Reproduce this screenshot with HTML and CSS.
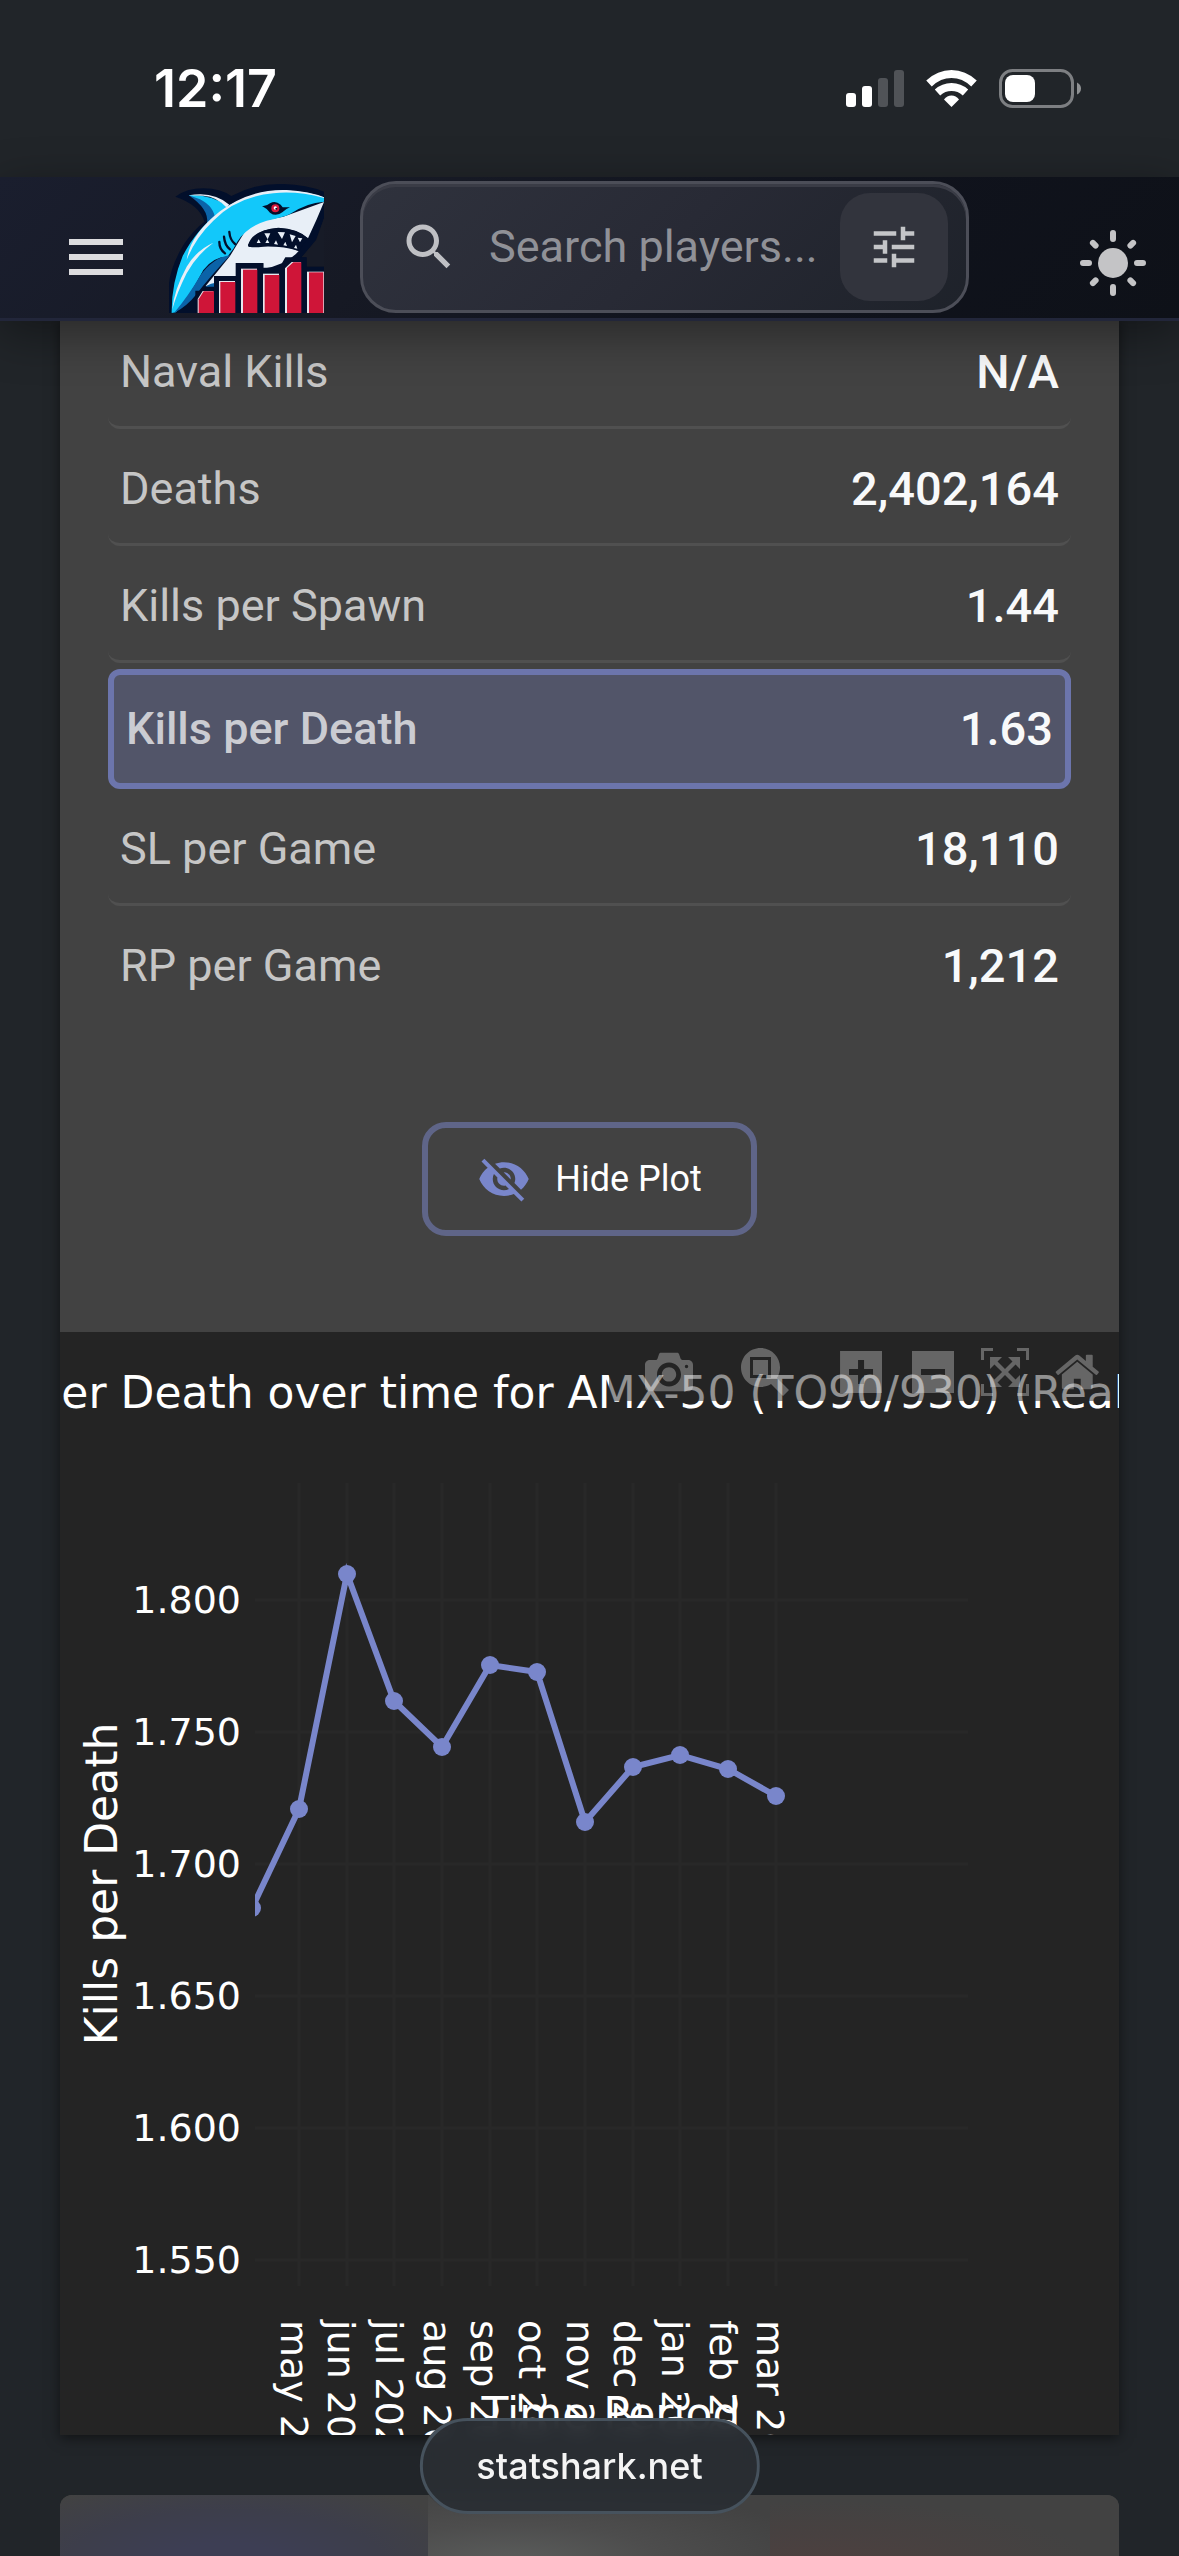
FILE: index.html
```html
<!DOCTYPE html>
<html lang="en">
<head>
<meta charset="utf-8">
<meta name="viewport" content="width=device-width, initial-scale=1">
<title>StatShark</title>
<link rel="stylesheet" href="styles.css">
</head>
<body>
<div class="page">
  <div class="status-bar">
    <time class="status-time">12:17</time>
    <div class="status-icons">
      <svg class="signal" viewBox="0 0 58 37" aria-hidden="true">
        <g fill="#fff"><rect x="0" y="23" width="10" height="14" rx="3"/><rect x="16" y="16" width="10" height="21" rx="3"/></g>
        <g fill="#505357"><rect x="32" y="8" width="10" height="29" rx="3"/><rect x="48" y="0" width="10" height="37" rx="3"/></g>
      </svg>
      <svg class="wifi" viewBox="0 0 51 37" aria-hidden="true">
        <g fill="none" stroke="#fff" stroke-width="8"><path d="M3 13.500Q13 4 25.500 4T48 13.500"/><path d="M11.500 22.500Q17.500 17 25.500 17T39.500 22.500" /></g>
        <path fill="#fff" d="M25.500 37 18 29.500Q21 25.500 25.500 25.500T33 29.500Z"/>
      </svg>
      <svg class="battery" viewBox="0 0 82 39" aria-hidden="true">
        <rect x="1.500" y="1.500" width="72" height="36" rx="12" fill="none" stroke="#7d7f82" stroke-width="3"/>
        <rect x="6" y="6" width="30" height="27" rx="8" fill="#fff"/>
        <path d="M78 13.500Q82 15.500 82 19.500T78 25.500Z" fill="#8f9193"/>
      </svg>
    </div>
  </div>

  <header class="top-bar">
    <button class="icon-button menu-button" type="button" aria-label="Menu">
      <svg viewBox="0 0 24 24"><path d="M3 18h18v-2H3zm0-5h18v-2H3zm0-7v2h18V6z"/></svg>
    </button>
    <a class="logo" href="#" aria-label="StatShark home">
      <svg viewBox="57 30 465 399">
        <path fill="#020f2b" d="M57 429V340Q62 290 100 225Q130 180 163 155Q150 105 76 80Q110 55 160 55Q212 56 244 78Q320 38 400 42Q470 44 522 65V145L498 210L455 262L470 262V290H522V429Z"/>
        <path fill="#171b27" d="M470 262H522V290H470ZM522 145 500 210 455 262H522Z"/>
        <path fill="#0b63a8" d="M116 76Q190 78 228 113L190 160L171 160Q178 118 116 76Z"/>
        <path fill="#12c8fa" d="M116 76Q170 70 235 108L196 152Q194 110 150 88Z"/>
        <path fill="#e8eff7" d="M116 76Q190 62 238 104L229 112Q200 80 160 77Z"/>
        <path fill="#e8eff7" d="M522 96Q500 150 474 205Q440 176 385 174Q315 178 294 225Q296 236 340 230Q400 228 446 243Q410 285 340 296V280H258V318H200L190 345L167 348L240 258L300 160L400 140Z"/>
        <path fill="#12c8fa" d="M65 429Q64 340 98 258Q140 175 220 116Q320 55 420 62Q480 66 522 82V95Q470 98 420 132Q400 142 350 152Q290 170 262 215Q250 240 232 260Q190 260 160 300Q115 385 78 427Z"/>
        <path fill="#e8eff7" d="M522 84Q440 62 370 70Q260 80 190 152Q135 205 110 270Q120 195 210 124Q300 56 410 60Q480 64 522 82Z"/>
        <path fill="#0b63a8" d="M240 256Q190 262 150 318Q115 378 72 429Q110 410 140 372Q175 326 240 256Z"/>
        <path fill="#e8eff7" d="M190 218Q140 255 110 310Q80 370 67 418Q72 360 110 290Q140 240 190 218Z"/>
        <path fill="#0b63a8" d="M175 345Q186 338 194 340V350H166Z"/>
        <g fill="none" stroke="#020f2b" stroke-width="7" stroke-linecap="round"><path d="M208 216Q208 238 225 250"/><path d="M222 200Q224 226 240 238"/><path d="M238 186Q240 210 255 222"/></g>
        <path fill="#020f2b" d="M336 108Q348 110 360 100Q376 90 392 104L398 112L420 112Q405 118 398 126Q378 142 360 128Q352 116 336 108Z"/>
        <circle cx="376" cy="115" r="12" fill="#d5193b"/><circle cx="376" cy="114" r="5" fill="#fff"/><circle cx="379" cy="116" r="3" fill="#020f2b"/>
        <path fill="#020f2b" d="M294 226Q306 180 385 173Q445 176 474 205Q462 222 446 243Q400 222 296 231Z"/>
        <path fill="#e8eff7" d="M343 190l10 18 8-18zm40-4 13 21 9-20zm36 7 7 24 11-19zm24 10 7 14 7-12zM320 219l6-11 6 11zm26 0 6-11 6 11zm26 3 6-11 6 13zm28 4 6-11 5 13zm32 8 6-10 4 12z"/>
        <path fill="#020f2b" d="M136 362H192V318H257V279H340V293H388L406 262H470V290H522V429H136Z"/>
        <g fill="#e6e7ee"><path d="M143 387 158 363H190V429H143Z"/><path d="M207 333H255V429H207Z"/><path d="M273 296H321V429H273Z"/><path d="M339 311H387V429H339Z"/><path d="M405 295 425 276H453V429H405Z"/><path d="M471 305H522V429H471Z"/></g>
        <g fill="#cf1538"><path d="M146 388 161 364H192V429H146Z"/><path d="M211 336H256V429H211Z"/><path d="M279 299H322V429H279Z"/><path d="M344 315H388V429H344Z"/><path d="M411 294 430 277H454V429H411Z"/><path d="M477 307H520V429H477Z"/></g>
      </svg>
    </a>
    <form class="search">
      <svg class="search-icon" viewBox="0 0 24 24" aria-hidden="true"><path d="M15.500 14h-.79l-.28-.27C15.410 12.590 16 11.110 16 9.500 16 5.910 13.090 3 9.500 3S3 5.910 3 9.500 5.910 16 9.500 16c1.610 0 3.090-.59 4.230-1.570l.27.28v.79l5 4.990L20.490 19zm-6 0C7.010 14 5 11.990 5 9.500S7.010 5 9.500 5 14 7.010 14 9.500 11.990 14 9.500 14"/></svg>
      <input class="search-input" type="text" placeholder="Search players..." aria-label="Search players">
      <button class="filter-button" type="button" aria-label="Search filters">
        <svg viewBox="0 0 24 24"><path d="M3 17v2h6v-2zM3 5v2h10V5zm10 16v-2h8v-2h-8v-2h-2v6zM7 9v2H3v2h4v2h2V9zm14 4v-2H11v2zm-6-4h2V7h4V5h-4V3h-2z"/></svg>
      </button>
    </form>
    <button class="icon-button theme-button" type="button" aria-label="Light mode">
      <svg viewBox="0 0 24 24"><circle cx="12" cy="12" r="5"/><path class="rays" d="M12 2v2M12 20v2M2 12h2M20 12h2M5.300 5.300l.9.9M17.800 17.800l.9.9M18.700 5.300l-.9.9M6.200 17.800l-.9.900"/></svg>
    </button>
  </header>

  <main class="content">
    <section class="stats-card">
      <dl class="stats">
        <div class="stat"><dt>Naval Kills</dt><dd>N/A</dd></div>
        <div class="stat"><dt>Deaths</dt><dd>2,402,164</dd></div>
        <div class="stat"><dt>Kills per Spawn</dt><dd>1.44</dd></div>
        <div class="stat selected"><dt>Kills per Death</dt><dd>1.63</dd></div>
        <div class="stat"><dt>SL per Game</dt><dd>18,110</dd></div>
        <div class="stat"><dt>RP per Game</dt><dd>1,212</dd></div>
      </dl>
      <button class="plot-toggle" type="button">
        <svg viewBox="0 0 24 24" aria-hidden="true"><path d="M12 7c2.760 0 5 2.240 5 5 0 .65-.13 1.260-.36 1.830l2.920 2.920c1.510-1.260 2.700-2.890 3.430-4.750-1.730-4.390-6-7.500-11-7.500-1.400 0-2.740.25-3.980.7l2.160 2.160C10.740 7.130 11.350 7 12 7M2 4.270l2.280 2.280.46.46C3.080 8.300 1.780 10.020 1 12c1.730 4.390 6 7.500 11 7.500 1.550 0 3.030-.3 4.380-.84l.42.42L19.730 22 21 20.730 3.270 3zM7.530 9.800l1.550 1.550c-.05.21-.08.43-.08.65 0 1.660 1.340 3 3 3 .22 0 .44-.03.65-.08l1.550 1.550c-.67.33-1.410.53-2.200.53-2.760 0-5-2.240-5-5 0-.79.2-1.530.53-2.200m4.310-.78 3.150 3.150.02-.16c0-1.660-1.340-3-3-3z"/></svg>
        Hide Plot
      </button>
      <figure class="plot">
        <svg class="chart" viewBox="60 1332 1059 1103" role="img" aria-label="Kills per Death over time">
          <defs><clipPath id="plot-area"><rect x="255" y="1483" width="713" height="803"/></clipPath></defs>
          <path class="grid" d="M255 1600H968M255 1732H968M255 1864H968M255 1996H968M255 2128H968M255 2260H968M299 1483V2286M347 1483V2286M394 1483V2286M442 1483V2286M490 1483V2286M537 1483V2286M585 1483V2286M633 1483V2286M680 1483V2286M728 1483V2286M776 1483V2286"/>
          <g clip-path="url(#plot-area)">
            <path class="line" d="M252 1908 299 1809 347 1574 394 1701 442 1747 490 1665 537 1672 585 1822 633 1767 680 1755 728 1769 776 1796"/>
            <g class="dots"><circle cx="252" cy="1908" r="9"/><circle cx="299" cy="1809" r="9"/><circle cx="347" cy="1574" r="9"/><circle cx="394" cy="1701" r="9"/><circle cx="442" cy="1747" r="9"/><circle cx="490" cy="1665" r="9"/><circle cx="537" cy="1672" r="9"/><circle cx="585" cy="1822" r="9"/><circle cx="633" cy="1767" r="9"/><circle cx="680" cy="1755" r="9"/><circle cx="728" cy="1769" r="9"/><circle cx="776" cy="1796" r="9"/></g>
          </g>
          <g class="tick-y">
            <text x="241" y="1613">1.800</text><text x="241" y="1745">1.750</text><text x="241" y="1877">1.700</text><text x="241" y="2009">1.650</text><text x="241" y="2141">1.600</text><text x="241" y="2273">1.550</text>
          </g>
          <g class="tick-x">
            <text transform="translate(281 2320) rotate(90)">may 2024</text><text transform="translate(328 2320) rotate(90)">jun 2024</text><text transform="translate(376 2320) rotate(90)">jul 2024</text><text transform="translate(424 2320) rotate(90)">aug 2024</text><text transform="translate(471 2320) rotate(90)">sep 2024</text><text transform="translate(519 2320) rotate(90)">oct 2024</text><text transform="translate(567 2320) rotate(90)">nov 2024</text><text transform="translate(614 2320) rotate(90)">dec 2024</text><text transform="translate(662 2320) rotate(90)">jan 2025</text><text transform="translate(710 2320) rotate(90)">feb 2025</text><text transform="translate(757 2320) rotate(90)">mar 2025</text>
          </g>
          <text class="axis-title" x="611" y="2429">Time Period</text>
          <text class="axis-title" transform="translate(117 1884) rotate(-90)">Kills per Death</text>
          <text class="chart-title" x="-69" y="1408">Kills per Death over time for AMX-50 (TO90/930) (Realistic)</text>
        </svg>
        <div class="modebar">
          <button class="mode" type="button" aria-label="Download plot"><svg viewBox="0 0 1000 1000"><path transform="matrix(1 0 0 -1 0 850)" d="m500 450c-83 0-150-67-150-150 0-83 67-150 150-150 83 0 150 67 150 150 0 83-67 150-150 150z m400 150h-120c-16 0-34 13-39 29l-31 93c-6 15-23 28-40 28h-340c-16 0-34-13-39-28l-31-94c-6-15-23-28-40-28h-120c-55 0-100-45-100-100v-450c0-55 45-100 100-100h800c55 0 100 45 100 100v450c0 55-45 100-100 100z m-400-550c-138 0-250 112-250 250 0 138 112 250 250 250 138 0 250-112 250-250 0-138-112-250-250-250z m365 380c-19 0-35 16-35 35 0 19 16 35 35 35 19 0 35-16 35-35 0-19-16-35-35-35z"/></svg></button>
          <button class="mode group" type="button" aria-label="Zoom"><svg viewBox="0 0 1000 1000"><path transform="matrix(1 0 0 -1 0 850)" d="m1000-25l-250 251c40 63 63 138 63 218 0 224-182 406-407 406-224 0-406-182-406-406s183-406 407-406c80 0 155 22 218 62l250-250 125 125z m-812 250l0 438 437 0 0-438-437 0z m62 375l313 0 0-312-313 0 0 312z"/></svg></button>
          <button class="mode group" type="button" aria-label="Zoom in"><svg viewBox="0 0 875 1000"><path transform="matrix(1 0 0 -1 0 850)" d="m1 787l0-875 875 0 0 875-875 0z m687-500l-187 0 0-187-125 0 0 187-188 0 0 125 188 0 0 187 125 0 0-187 187 0 0-125z"/></svg></button>
          <button class="mode" type="button" aria-label="Zoom out"><svg viewBox="0 0 875 1000"><path transform="matrix(1 0 0 -1 0 850)" d="m0 788l0-876 875 0 0 876-875 0z m688-500l-500 0 0 125 500 0 0-125z"/></svg></button>
          <button class="mode" type="button" aria-label="Autoscale"><svg viewBox="0 0 1000 1000"><path transform="matrix(1 0 0 -1 0 850)" d="m250 850l-187 0-63 0 0-62 0-188 63 0 0 188 187 0 0 62z m688 0l-188 0 0-62 188 0 0-188 62 0 0 188 0 62-62 0z m-875-938l0 188-63 0 0-188 0-62 63 0 187 0 0 62-187 0z m875 188l0-188-188 0 0-62 188 0 62 0 0 62 0 188-62 0z m-125 188l-1 0-93-94-156 156 156 156 92-93 2 0 0 250-250 0 0-2 93-92-156-156-156 156 94 92 0 2-250 0 0-250 0 0 93 93 157-156-157-156-93 94 0 0 0-250 250 0 0 0-94 93 156 157 156-157-93-93 0 0 250 0 0 250z"/></svg></button>
          <button class="mode" type="button" aria-label="Reset axes"><svg viewBox="0 0 928 1000"><path transform="matrix(1 0 0 -1 0 850)" d="m786 296v-267q0-15-11-26t-25-10h-214v214h-143v-214h-214q-15 0-25 10t-11 26v267q0 1 0 2t0 2l321 264 321-264q1-1 1-4z m124 39l-34-41q-5-5-12-6h-2q-7 0-12 3l-386 322-386-322q-7-4-13-4-7 2-12 7l-35 41q-4 5-3 13t6 12l401 334q18 15 42 15t43-15l136-114v109q0 8 5 13t13 5h107q8 0 13-5t5-13v-227l122-102q5-5 6-12t-4-13z"/></svg></button>
        </div>
      </figure>
    </section>
    <section class="next-card">
      <div class="banner banner-left"></div>
      <div class="banner banner-middle"></div>
      <div class="banner banner-right"></div>
    </section>
  </main>
</div>
<a class="address-pill" href="#">statshark.net</a>
</body>
</html>
```
FILE: styles.css
```css
* { box-sizing: border-box; }

body {
  margin: 0;
  background: #212529;
  color: #f8f9fa;
  font-family: Roboto, "Liberation Sans", sans-serif;
}

button { padding: 0; border: 0; background: none; color: inherit; font: inherit; }
svg { display: block; }

.page {
  display: flex;
  flex-direction: column;
  min-height: 100vh;
  overflow: hidden;
}

/* Status bar */
.status-bar {
  display: flex;
  justify-content: space-between;
  align-items: center;
  height: 177px;
  padding: 0 98px 0 154px;
}
.status-time { font: 600 52px/60px Inter, sans-serif; color: #fff; }
.status-icons { display: flex; align-items: center; gap: 22px; }
.signal { width: 58px; height: 37px; }
.wifi { width: 51px; height: 37px; }
.battery { width: 82px; height: 39px; }

/* Header */
.top-bar {
  position: relative;
  z-index: 2;
  display: flex;
  align-items: flex-end;
  height: 144px;
  padding: 0 30px 5px 60px;
  border-bottom: 3px solid #22263a;
  background: linear-gradient(135deg, #1a1e2e 0%, #161924 35%, #10131d 65%, #0e1118 100%);
  box-shadow: 0 12px 48px rgba(0, 0, 0, 0.4);
}
.icon-button { width: 72px; height: 72px; fill: #dcdcde; }
.icon-button svg { width: 72px; height: 72px; }
.menu-button { margin-bottom: 20px; }
.theme-button { margin-bottom: 14px; fill: #c4c4c6; }
.rays { fill: none; stroke: #c4c4c6; stroke-width: 2; stroke-linecap: round; }
.logo { margin: 0 36px 0 37px; }
.logo svg { width: 155px; height: 133px; }
.search {
  display: flex;
  flex: 1;
  align-items: center;
  min-width: 0;
  height: 132px;
  margin-right: 108px;
  padding: 0 18px 0 36px;
  border: 3px solid #4c4e58;
  border-radius: 36px;
  background: linear-gradient(135deg, #2f323d, #282a35 50%, #1e222a);
  box-shadow: inset 0 3px 0 #3a3c46;
}
.search-icon { flex: none; width: 60px; height: 60px; fill: #bfc0c4; }
.search-input {
  flex: 1;
  min-width: 0;
  margin: 0 16px 0 30px;
  padding: 0;
  border: 0;
  outline: 0;
  background: none;
  color: #fff;
  font: 400 45px/60px Roboto, sans-serif;
}
.search-input::placeholder { color: #909197; opacity: 1; }
.filter-button {
  display: grid;
  place-items: center;
  flex: none;
  width: 108px;
  height: 108px;
  border-radius: 30px;
  background: #32343d;
}
.filter-button svg { width: 54px; height: 54px; fill: #c4c5c8; }

/* Statistics card */
.content {
  display: flex;
  flex: 1;
  flex-direction: column;
  gap: 60px;
  margin-top: -3px;
  padding: 0 60px;
}
.stats-card {
  background: #424242;
  box-shadow: 0 3px 12px rgba(0, 0, 0, 0.5);
}
.stats {
  display: flex;
  flex-direction: column;
  gap: 6px;
  margin: 0;
  padding: 0 48px;
}
.stat {
  display: flex;
  justify-content: space-between;
  align-items: center;
  height: 111px;
  padding: 0 12px;
  border-bottom: 3px solid #505050;
  border-radius: 12px;
}
.stat:last-child { border-color: transparent; }
.stat dt { color: #c6c6c6; font-size: 45px; line-height: 60px; }
.stat dd { margin: 0; font-size: 47px; font-weight: 500; line-height: 60px; }
.stat.selected {
  height: 120px;
  border: 6px solid #6c75ac;
  background: #525569;
}
.stat.selected dt { color: #cbccd2; font-weight: 500; }
.plot-toggle {
  display: flex;
  align-items: center;
  gap: 24px;
  height: 114px;
  margin: 99px auto 96px;
  padding: 0 49px;
  border: 6px solid #5f6588;
  border-radius: 24px;
  color: #fff;
  font-size: 36px;
}
.plot-toggle svg { width: 54px; height: 54px; fill: #7986cb; }

/* Plot */
.plot { position: relative; margin: 0; background: #242424; }
.chart { width: 100%; height: auto; overflow: hidden; }
.chart text { fill: #fff; font-family: "DejaVu Sans", sans-serif; }
.grid { stroke: #282828; stroke-width: 3; }
.line { fill: none; stroke: #7986cb; stroke-width: 6; }
.dots { fill: #7986cb; }
.tick-y { font-size: 38px; text-anchor: end; }
.tick-x { font-size: 38px; }
.axis-title { font-size: 44px; text-anchor: middle; }
.chart-title { font-size: 44px; }
.modebar {
  position: absolute;
  top: 6px;
  right: 6px;
  display: flex;
  height: 63px;
  padding: 10px 0 0 24px;
  background: rgba(36, 36, 36, 0.5);
}
.mode { width: 72px; height: 48px; fill: rgba(255, 255, 255, 0.3); }
.mode.group { margin-left: 24px; }
.mode svg { height: 48px; margin: 0 auto; }

/* Vehicle banner card */
.next-card {
  display: grid;
  grid-template-columns: 368fr 342fr 349fr;
  flex: 1;
  overflow: hidden;
  border-radius: 12px 12px 0 0;
  background: #424242;
}
.banner-left { background: radial-gradient(ellipse at 45% 110%, #3d3e54 20%, #3d3e4b 55%, #424242 90%); }
.banner-middle { background: radial-gradient(ellipse at 25% 110%, #595b5a 5%, #4d4d4d 40%, #424242 85%); }
.banner-right { background: radial-gradient(ellipse at 15% 115%, #4d403f, #424242 65%); }

/* Browser address pill */
.address-pill {
  position: fixed;
  bottom: 42px;
  left: 50%;
  z-index: 3;
  transform: translateX(-50%);
  padding: 0 54px;
  border: 3px solid #46525d;
  border-radius: 48px;
  background: rgba(41, 46, 51, 0.94);
  backdrop-filter: blur(8px);
  color: #f4f4f4;
  font: 500 36px/90px Inter, sans-serif;
  text-decoration: none;
}
```
